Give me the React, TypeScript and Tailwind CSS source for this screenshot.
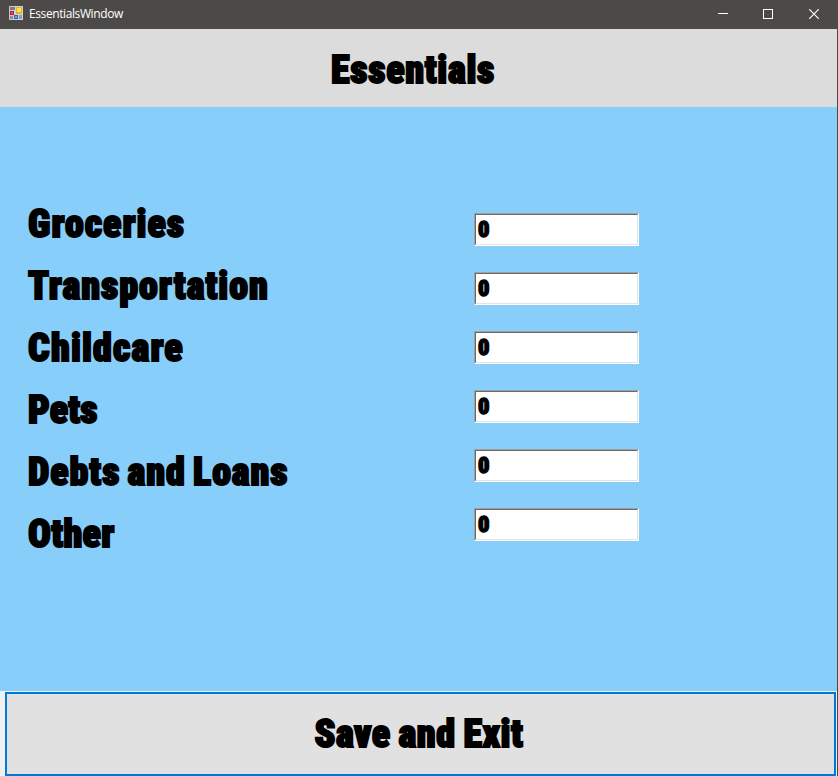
const heavy =
  "font-['Roboto_Condensed','Liberation_Sans',sans-serif] font-black text-black whitespace-nowrap";

const fields = [
  { label: 'Groceries', tracking: 'tracking-[1px]' },
  { label: 'Transportation', tracking: 'tracking-[1px]' },
  { label: 'Childcare', tracking: 'tracking-[1.15px]' },
  { label: 'Pets', tracking: 'tracking-[0.1px]' },
  { label: 'Debts and Loans', tracking: 'tracking-[0.95px] [word-spacing:-2.5px]' },
  { label: 'Other', tracking: 'tracking-[0.3px]' },
];

function FormIcon() {
  return (
    <svg width="15" height="15" viewBox="0 0 15 15" shapeRendering="crispEdges">
      <rect x="0" y="0" width="7" height="14" fill="#c9c6c4" />
      <rect x="4" y="0" width="10" height="14" fill="#d4d2d0" />
      <rect x="1" y="1" width="5" height="3" fill="#7d7b79" />
      <rect x="1" y="5" width="4" height="4" fill="#b3202c" />
      <rect x="2" y="6" width="2" height="2" fill="#e2565c" />
      <rect x="7" y="1" width="6" height="7" fill="#e3b02c" />
      <rect x="8" y="2" width="4" height="4" fill="#ffe25e" />
      <rect x="1" y="10" width="3" height="3" fill="#8f8d8b" />
      <rect x="5" y="9" width="4" height="4" fill="#2f5fc0" />
      <rect x="6" y="10" width="2" height="2" fill="#6fa2ec" />
      <rect x="10" y="9" width="3" height="4" fill="#8c9cc0" />
    </svg>
  );
}

function TitleBar() {
  return (
    <header className="flex h-[29px] shrink-0 items-start bg-[#4c4a48] pl-[9px] text-white">
      <div className="mt-[6px]">
        <FormIcon />
      </div>
      <span className="mt-[5px] ml-[5px] font-['Open_Sans','Noto_Sans',sans-serif] text-[12px] leading-[18px] tracking-[-0.4px]">
        EssentialsWindow
      </span>
      <div className="ml-auto flex">
        <div className="flex h-[27px] w-[45px] items-center justify-center">
          <svg width="10" height="10" viewBox="0 0 10 10" shapeRendering="crispEdges">
            <path d="M0 4.5H10" stroke="#fff" />
          </svg>
        </div>
        <div className="flex h-[27px] w-[46px] items-center justify-center">
          <svg width="10" height="10" viewBox="0 0 10 10" shapeRendering="crispEdges">
            <rect x="0.5" y="0.5" width="9" height="9" fill="none" stroke="#fff" />
          </svg>
        </div>
        <div className="flex h-[27px] w-[46px] items-center justify-center">
          <svg width="10" height="10" viewBox="0 0 10 10">
            <path d="M0.2 0.2L9.8 9.8M9.8 0.2L0.2 9.8" stroke="#fff" strokeWidth="1.2" />
          </svg>
        </div>
      </div>
    </header>
  );
}

function AmountBox() {
  return (
    <div className="h-[33px] w-[165px] border border-t-[#a0a0a0] border-r-white border-b-white border-l-[#a0a0a0]">
      <div className="flex h-full items-center border border-t-[#696969] border-r-[#e3e3e3] border-b-[#e3e3e3] border-l-[#696969] bg-white pl-[2px]">
        <span className={`${heavy} text-[22.5px] leading-[29px] [-webkit-text-stroke:1.4px_black]`}>0</span>
      </div>
    </div>
  );
}

export default function App() {
  return (
    <div className="flex h-[776px] w-[838px] flex-col overflow-hidden border-r border-[#4c4a48] bg-[#f0f0f0]">
      <TitleBar />
      <div className="flex h-[78px] shrink-0 items-center justify-center bg-[#dcdcdc] pt-1 pr-[11px]">
        <h1 className={`${heavy} text-[38px] leading-[62px] tracking-[0.7px] [-webkit-text-stroke:1.9px_black]`}>
          Essentials
        </h1>
      </div>
      <main className="flex h-[584px] shrink-0 bg-[#87cefa] pl-[28px]">
        <div className="flex w-[446px] flex-col pt-[86px]">
          {fields.map((f) => (
            <div
              key={f.label}
              className={`${heavy} h-[62px] text-[38px] leading-[62px] [-webkit-text-stroke:1.9px_black] ${f.tracking}`}
            >
              {f.label}
            </div>
          ))}
        </div>
        <div className="flex flex-col gap-[26px] pt-[106px]">
          {fields.map((f) => (
            <AmountBox key={f.label} />
          ))}
        </div>
      </main>
      <div className="flex grow pt-px pr-px pl-[5px]">
        <button className="flex grow items-center justify-center border-2 border-[#0078d7] bg-[#e1e1e1] pr-[3px]">
          <span className={`${heavy} text-[38px] leading-[62px] tracking-[0.55px] [word-spacing:-1.5px] [-webkit-text-stroke:1.9px_black]`}>
            Save and Exit
          </span>
        </button>
      </div>
    </div>
  );
}
